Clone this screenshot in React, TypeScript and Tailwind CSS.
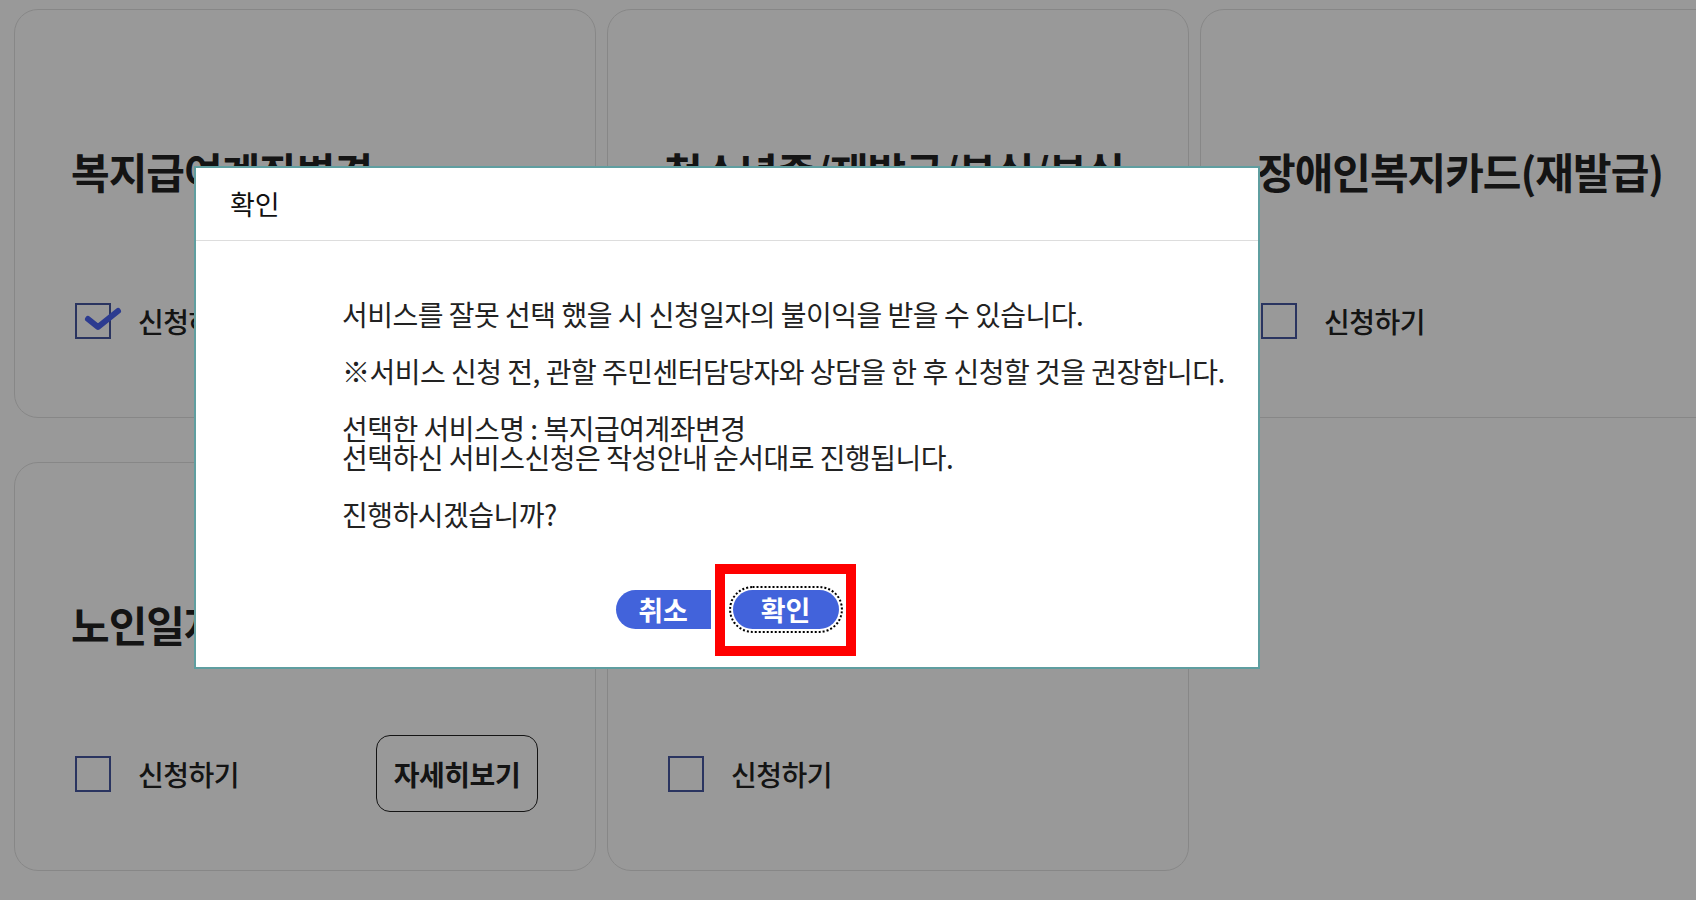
import React from 'react';

const font = { fontFamily: '"Noto Sans CJK KR", "Noto Sans", sans-serif' };

type Service = { title: string; checked?: boolean; detail?: boolean };

const services: Service[] = [
  { title: '복지급여계좌변경', checked: true, detail: true },
  { title: '청소년증/재발급/분실/부실' },
  { title: '장애인복지카드(재발급)' },
  { title: '노인일자리신청', detail: true },
  { title: '기초연금신청' },
];

function ServiceCard({ service }: { service: Service }) {
  return (
    <div className="h-[409px] rounded-[24px] border border-[#e2e2e2] bg-white pl-[60px] pr-[57px] pt-[136px] flex flex-col">
      <h2 className="-ml-[4px] text-[42px] leading-[50px] font-bold tracking-[-1px] text-[#222] whitespace-nowrap">
        {service.title}
      </h2>
      <div className="mt-[86px] h-[77px] flex items-center justify-between">
        <label className="flex items-center gap-[27px]">
          <span className="relative w-[36px] h-[36px] border-2 border-[#4658a0] bg-white">
            {service.checked && (
              <svg className="absolute left-0 top-0 overflow-visible" width="46" height="36" viewBox="0 0 46 36">
                <path d="M11 14 L21 22 L41 6" fill="none" stroke="#4a63f0" strokeWidth="6" strokeLinecap="round" strokeLinejoin="round" />
              </svg>
            )}
          </span>
          <span className="text-[28px] font-medium tracking-[-0.5px] text-[#222]">신청하기</span>
        </label>
        {service.detail && (
          <button className="w-[162px] h-[77px] rounded-[14px] border-[1.5px] border-[#222] text-[28px] font-semibold tracking-[-0.5px] text-[#222]">
            자세히보기
          </button>
        )}
      </div>
    </div>
  );
}

export default function App() {
  return (
    <div className="relative w-full h-screen overflow-hidden bg-white" style={font}>
      <div className="grid grid-cols-[repeat(3,582px)] gap-x-[11px] gap-y-[44px] pl-[14px] pt-[9px]">
        {services.map((s) => (
          <ServiceCard key={s.title} service={s} />
        ))}
      </div>

      {/* dimmed backdrop */}
      <div className="absolute inset-0 bg-black/40" />

      {/* confirm dialog */}
      <div className="absolute left-[194px] top-[166px] w-[1066px] h-[503px] bg-white border-2 border-[#5f9ea0] flex flex-col">
        <div className="h-[73px] shrink-0 flex items-center px-[34px] border-b border-[#dddddd]">
          <span className="text-[27px] text-[#111]">확인</span>
        </div>
        <div className="pl-[146px] pt-[59px] text-[28px] leading-[28.5px] tracking-[-0.5px] text-[#222]">
          <p>서비스를 잘못 선택 했을 시 신청일자의 불이익을 받을 수 있습니다.</p>
          <br />
          <p>※서비스 신청 전, 관할 주민센터담당자와 상담을 한 후 신청할 것을 권장합니다.</p>
          <br />
          <p>선택한 서비스명 : 복지급여계좌변경</p>
          <p>선택하신 서비스신청은 작성안내 순서대로 진행됩니다.</p>
          <br />
          <p>진행하시겠습니까?</p>
        </div>
        <div className="mt-[62px] flex justify-center gap-[22px]">
          <button className="w-[95px] h-[39px] rounded-l-full bg-[#4263db] text-white text-[27px] font-bold leading-none">
            취소
          </button>
          <div className="relative">
            <button className="w-[106px] h-[39px] rounded-full bg-[#4263db] text-white text-[27px] font-bold leading-none outline-2 outline-dotted outline-black outline-offset-[2px]">
              확인
            </button>
            {/* highlight box */}
            <div className="absolute -left-[18px] -right-[17px] -top-[26px] -bottom-[27px] border-[10px] border-[#ff0000] pointer-events-none" />
          </div>
        </div>
      </div>
    </div>
  );
}
